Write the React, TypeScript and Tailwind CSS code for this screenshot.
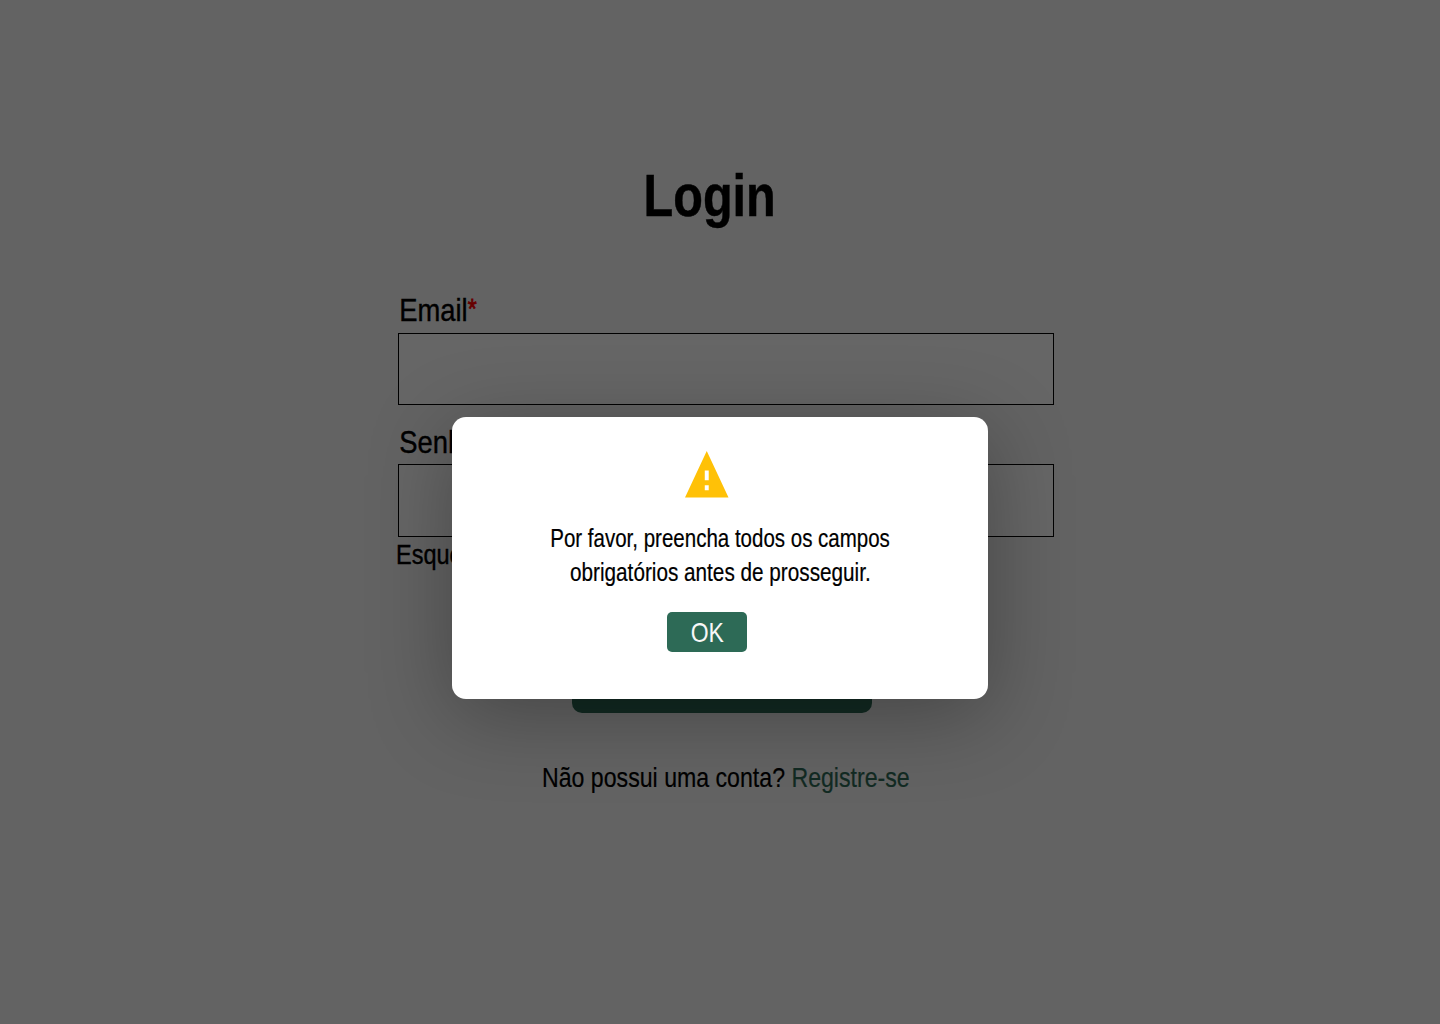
import type { ReactNode } from "react";

function Field({ label, className, inputClassName }: { label: ReactNode; className: string; inputClassName: string }) {
  return (
    <div className={className}>
      <label className="block h-8 w-fit origin-left scale-x-[0.855] whitespace-nowrap pl-[1.5px] text-[32px] leading-8 [-webkit-text-stroke:0.4px]">
        {label}
      </label>
      <input className={`block w-full border border-black bg-white outline-none ${inputClassName}`} />
    </div>
  );
}

function LoginPage() {
  return (
    <main className="flex h-full flex-col bg-[#f7f7f7] pt-[166px]">
      <h1 className="ml-[-20px] self-center scale-x-[0.81] text-[60px] font-bold leading-[60px] [-webkit-text-stroke:0.5px]">Login</h1>
      <form className="ml-[398px] mt-[68px] flex w-[656px] flex-col">
        <Field
          className="flex flex-col gap-[7px]"
          inputClassName="h-[72px]"
          label={
            <>
              Email<span className="inline-block -translate-y-[3px] text-[27px] leading-none text-[#ff0000] [-webkit-text-stroke:0.8px]">*</span>
            </>
          }
        />
        <Field
          className="mt-[21px] flex flex-col gap-[6px]"
          inputClassName="h-[73px]"
          label={
            <>
              Senha<span className="inline-block -translate-y-[3px] text-[27px] leading-none text-[#ff0000]">*</span>
            </>
          }
        />
        <a className="-ml-0.5 mt-1 w-fit origin-left scale-x-[0.84] whitespace-nowrap text-[28px] leading-7 [-webkit-text-stroke:0.4px]">
          Esqueceu
        </a>
        <button type="button" className="ml-[174px] mt-20 h-16 w-[300px] rounded-[10px] bg-[#2d6a56] text-[28px] text-white">
          Entrar
        </button>
      </form>
      <p className="ml-[541.5px] mt-[51px] w-fit origin-left scale-x-[0.826] whitespace-nowrap text-[28px] leading-7 [-webkit-text-stroke:0.2px]">
        Não possui uma conta? <a className="text-[#2d6a56]">Registre-se</a>
      </p>
    </main>
  );
}

function WarningIcon() {
  return (
    <svg className="h-[46.5px] w-[43.5px]" viewBox="1 2 22 19" preserveAspectRatio="none" fill="#ffc107" aria-hidden="true">
      <path d="M1 21h22L12 2 1 21zm12-3h-2v-2h2v2zm0-4h-2v-4h2v4z" />
    </svg>
  );
}

function AlertDialog() {
  return (
    <div role="alertdialog" className="flex h-[282px] w-[536px] flex-col items-center rounded-[14px] bg-white pt-[34px] shadow-[0_16px_84px_rgba(0,0,0,0.3)]">
      <div className="-ml-[26.5px] h-[47px]">
        <WarningIcon />
      </div>
      <div className="mt-[23px] flex flex-col items-center whitespace-nowrap text-[25px] leading-[34px] [-webkit-text-stroke:0.2px]">
        <span className="scale-x-[0.82]">Por favor, preencha todos os campos</span>
        <span className="scale-x-[0.829]">obrigatórios antes de prosseguir.</span>
      </div>
      <button type="button" className="-ml-[26px] mt-[23px] flex h-10 w-20 items-center justify-center rounded-[5px] bg-[#2d6a56] pt-0.5 text-[28px] leading-10 text-[#f7f7f7]">
        <span className="scale-x-[0.82]">OK</span>
      </button>
    </div>
  );
}

export default function App() {
  return (
    <div className="relative h-[1024px] w-[1440px] overflow-hidden font-['Liberation_Sans',sans-serif] text-black">
      <LoginPage />
      <div className="absolute inset-0 flex justify-center bg-black/60 pt-[417px]">
        <AlertDialog />
      </div>
    </div>
  );
}
